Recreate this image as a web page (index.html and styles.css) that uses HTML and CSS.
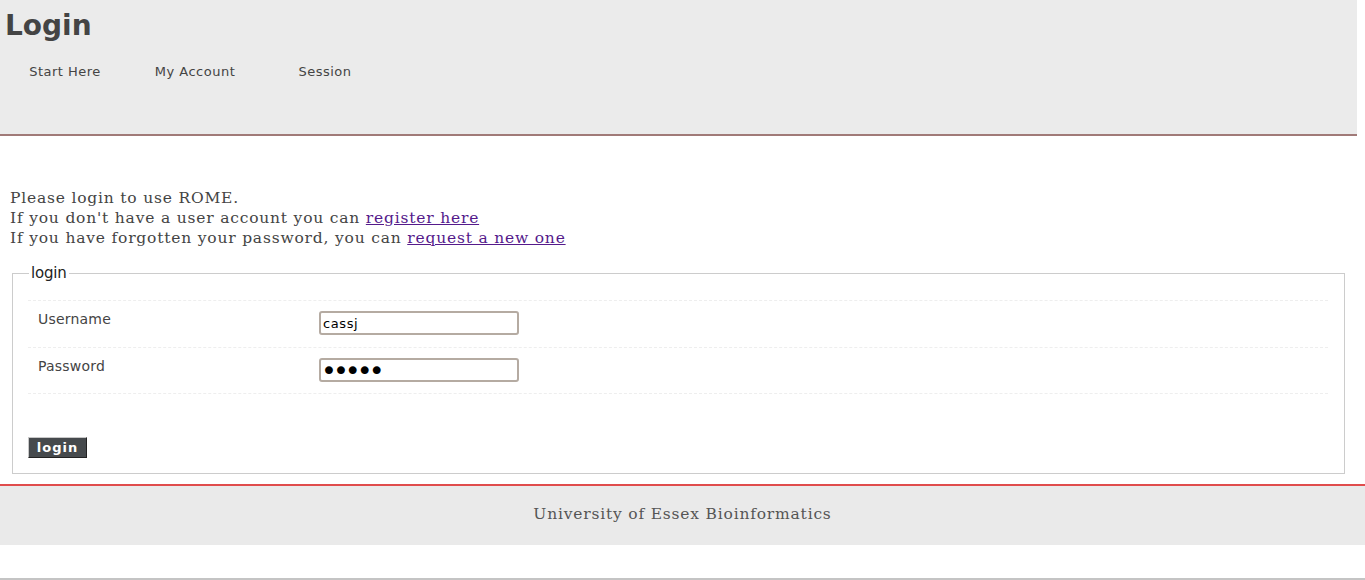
FILE: index.html
```html
<!DOCTYPE html>
<html>
<head>
<meta charset="utf-8">
<title>Login</title>
<link rel="stylesheet" href="styles.css">
</head>
<body>
<div class="header">
  <h1 class="title">Login</h1>
  <ul class="nav">
    <li><a href="#">Start Here</a></li>
    <li><a href="#">My Account</a></li>
    <li><a href="#">Session</a></li>
  </ul>
</div>
<div class="content">
  <p class="intro">Please login to use ROME.<br>
  If you don't have a user account you can <a href="#">register here</a><br>
  If you have forgotten your password, you can <a href="#">request a new one</a></p>
  <form class="login-form">
    <fieldset class="box">
      <legend class="legend">login</legend>
      <div class="rows">
        <div class="row">
          <label class="label">Username</label>
          <input class="field" type="text" value="cassj">
        </div>
        <div class="row">
          <label class="label">Password</label>
          <input class="field pw" type="password" value="abcde">
        </div>
      </div>
      <button class="submit" type="button">login</button>
    </fieldset>
  </form>
</div>
<div class="footer">University of Essex Bioinformatics</div>
<div class="bottom-rule"></div>
</body>
</html>
```
FILE: styles.css
```css
html, body {
  margin: 0;
  padding: 0;
  background: #fff;
}
body {
  font-family: "DejaVu Serif", serif;
  color: #444;
}
.header {
  width: 1357px;
  height: 134px;
  background: #ebebeb;
  border-bottom: 2px solid #a07a78;
  box-sizing: content-box;
}
.title {
  margin: 0;
  padding: 6px 0 0 5px;
  font-family: "DejaVu Sans", sans-serif;
  font-weight: bold;
  font-size: 28px;
  line-height: 40px;
  color: #444;
}
.nav {
  list-style: none;
  margin: 15px 0 0 0;
  padding: 0;
  display: flex;
}
.nav li {
  width: 130px;
  text-align: center;
}
.nav a {
  font-family: "DejaVu Sans", sans-serif;
  font-size: 13px;
  letter-spacing: 0.5px;
  color: #444;
  text-decoration: none;
  line-height: 18px;
}
.content {
  padding: 0 20px 0 10px;
}
.intro {
  margin: 0;
  padding-top: 52px;
  font-size: 15.5px;
  letter-spacing: 0.8px;
  line-height: 20px;
  color: #444;
}
.intro a {
  color: #551a8b;
}
.login-form {
  margin: 0;
  padding: 16px 0 0 2px;
}
.box {
  margin: 0;
  border: 1px solid #ccc;
  padding: 18px 16px 15px 15px;
  width: 1333px;
  box-sizing: border-box;
  min-width: 0;
}
.legend {
  font-family: "DejaVu Sans", sans-serif;
  font-size: 15px;
  letter-spacing: -0.2px;
  color: #222;
  padding: 0 2px;
  margin-left: 1px;
}
.rows {
  border-top: 1px dashed #eee;
}
.row {
  display: flex;
  align-items: flex-start;
  height: 46px;
  border-bottom: 1px dashed #eee;
  box-sizing: border-box;
  padding-top: 10px;
}
.row:first-child {
  height: 47px;
}
.label {
  width: 281px;
  padding-left: 10px;
  font-family: "DejaVu Sans", sans-serif;
  font-size: 14px;
  letter-spacing: 0.2px;
  color: #444;
  line-height: 17px;
}
.field {
  margin: 0;
  width: 200px;
  height: 24px;
  box-sizing: border-box;
  border: 2px solid #b5aba2;
  border-radius: 3px;
  padding: 0 2px;
  font-family: "DejaVu Sans", sans-serif;
  font-size: 13px;
  letter-spacing: 0.6px;
  color: #000;
  background: #fff;
}
.pw {
  font-size: 27px;
  letter-spacing: -4px;
  padding: 0 0 0 0;
  line-height: 20px;
}
.submit {
  display: block;
  margin-top: 43px;
  width: 59px;
  height: 21px;
  padding: 0;
  background: #464a4d;
  color: #fff;
  font-family: "DejaVu Sans", sans-serif;
  font-weight: bold;
  font-size: 13px;
  letter-spacing: 1px;
  border: 1px solid;
  border-color: #c8c8c8 #222 #222 #c8c8c8;
  line-height: 18px;
}
.footer {
  margin-top: 10px;
  border-top: 2px solid #e04c4c;
  background: #eaeaea;
  height: 59px;
  line-height: 57px;
  text-align: center;
  font-size: 15.5px;
  letter-spacing: 0.8px;
  color: #555;
}
.bottom-rule {
  margin-top: 33px;
  border-top: 2px solid #c4c4c4;
}
```
